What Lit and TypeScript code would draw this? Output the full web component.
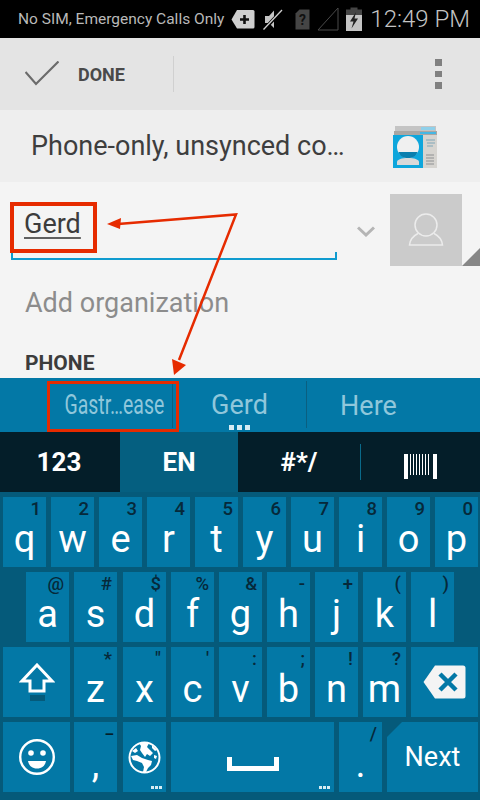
import { LitElement, html, css, svg } from 'lit';
import { customElement } from 'lit/decorators.js';

type Key = { main: string; sub?: string; nudge?: boolean };

const ROW1: Key[] = [
  { main: 'q', sub: '1' }, { main: 'w', sub: '2' }, { main: 'e', sub: '3' }, { main: 'r', sub: '4' },
  { main: 't', sub: '5' }, { main: 'y', sub: '6' }, { main: 'u', sub: '7' }, { main: 'i', sub: '8' },
  { main: 'o', sub: '9' }, { main: 'p', sub: '0' },
];
const ROW2: Key[] = [
  { main: 'a', sub: '@' }, { main: 's', sub: '#' }, { main: 'd', sub: '$', nudge: true }, { main: 'f', sub: '%' },
  { main: 'g', sub: '&' }, { main: 'h', sub: '-' }, { main: 'j', sub: '+' }, { main: 'k', sub: '(' }, { main: 'l', sub: ')' },
];
const ROW3: Key[] = [
  { main: 'z', sub: '*' }, { main: 'x', sub: '"', nudge: true }, { main: 'c', sub: "'" }, { main: 'v', sub: ':' },
  { main: 'b', sub: ';' }, { main: 'n', sub: '!' }, { main: 'm', sub: '?' },
];

@customElement('app-root')
export class AppRoot extends LitElement {
  static styles = css`
    :host {
      display: block;
      position: relative;
      width: 480px;
      height: 800px;
      overflow: hidden;
      background: #f4f4f4;
      font-family: Roboto, "Liberation Sans", sans-serif;
    }
    svg { display: block; flex: none; }

    .status {
      height: 38px;
      background: #000;
      display: flex;
      align-items: center;
      padding: 0 10px 0 18px;
      color: #b9b9b9;
    }
    .status-text { font-size: 15.5px; width: 213px; white-space: nowrap; }
    .status-icons { display: flex; align-items: center; flex: 1; }
    .time { font-size: 24px; font-weight: 300; color: #c4c4c4; margin-left: auto; white-space: nowrap; }
    .ic-mute { margin-left: 8px; }
    .ic-sim { margin-left: 12px; }
    .ic-signal { margin-left: 7px; }
    .ic-batt { margin-left: 7px; }

    .actionbar {
      height: 72px;
      background: #e4e4e4;
      display: flex;
      align-items: center;
      padding-left: 25px;
    }
    .done { font-size: 18px; font-weight: 700; color: #4a4a4a; margin-left: 19px; width: 48px; padding-top: 1px; }
    .divider { width: 1px; height: 36px; background: #d0d0d0; margin-left: 47px; }
    .overflow { margin-left: auto; margin-right: 38px; display: flex; flex-direction: column; gap: 5px; }
    .overflow i { display: block; width: 7px; height: 6.5px; background: #808080; }

    .account {
      height: 72px;
      background: #eeeeee;
      display: flex;
      align-items: center;
      padding-left: 31px;
      color: #3e3e3e;
      font-size: 27px;
    }
    .account span { width: 361px; white-space: nowrap; }

    .form { height: 196px; background: #f4f4f4; box-sizing: border-box; }
    .name-row { display: flex; height: 84px; padding: 12px 0 0 11px; box-sizing: border-box; }
    .name-field {
      width: 326px;
      height: 66px;
      box-sizing: border-box;
      border-bottom: 2px solid #0f9bcf;
      position: relative;
      padding: 14px 0 0 13px;
    }
    .name-field::before, .name-field::after {
      content: "";
      position: absolute;
      bottom: 0;
      width: 2px;
      height: 6px;
      background: #0f9bcf;
    }
    .name-field::before { left: 0; }
    .name-field::after { right: 0; }
    .name {
      font-size: 27px;
      color: #3c3c3c;
      text-decoration: underline;
      text-decoration-thickness: 2px;
      text-underline-offset: 4px;
      text-decoration-color: #606060;
    }
    .chevron { margin: 32px 0 0 20px; }
    .photo {
      width: 72px;
      height: 72px;
      background: #cbcbcb;
      margin-left: 15px;
      display: flex;
      align-items: center;
      justify-content: center;
      position: relative;
    }
    .corner { position: absolute; left: 72px; bottom: 0; }
    .org { font-size: 27px; color: #8c8c8c; padding: 22px 0 0 25px; height: 31px; line-height: 31px; }
    .section { font-size: 21px; font-weight: 700; color: #3c3c3c; padding: 33px 0 0 25px; line-height: 22px; }

    .suggest {
      height: 54px;
      background: #0378a6;
      display: flex;
      color: #90c7db;
      font-size: 27px;
      position: relative;
    }
    .sugg { display: flex; align-items: center; justify-content: center; height: 54px; box-sizing: border-box; }
    .sugg.first { width: 173px; padding-left: 56px; border-right: 1px solid #0a5f80; height: 47px; margin-top: 3px; padding-top: 1px; }
    .sugg.second { width: 134px; border-right: 1px solid #0a5f80; height: 47px; margin-top: 3px; padding-top: 1px; position: relative; }
    .sugg.third { width: 120px; padding-left: 3px; padding-top: 2px; }
    .squeezed { display: inline-block; transform: scaleX(0.72); white-space: nowrap; }
    .more { position: absolute; left: 50%; bottom: -2px; margin-left: -11px; display: flex; gap: 3px; }
    .more i { display: block; width: 5px; height: 5px; background: #d6ecf3; }

    .modes {
      height: 60px;
      background: #041e29;
      display: flex;
      align-items: center;
      color: #fff;
      font-size: 26px;
      font-weight: 700;
    }
    .mode { height: 60px; display: flex; align-items: center; justify-content: center; }
    .mode.num { width: 118px; }
    .mode.lang { width: 118px; margin-left: 2px; background: #055f80; }
    .mode.sym { width: 122px; }
    .mode-sep { width: 1px; height: 36px; background: #0a6a8a; }
    .barcode { margin: 8px 0 0 43px; }

    .keyboard {
      height: 308px;
      background: #055a7a;
      box-sizing: border-box;
      padding-top: 5px;
      display: flex;
      flex-direction: column;
      gap: 5px;
    }
    .row { display: flex; gap: 5px; padding-left: 3px; height: 70px; }
    .row.home { padding-left: 26px; }
    .key {
      width: 43px;
      height: 70px;
      background: #0378a6;
      color: #fff;
      position: relative;
      display: flex;
      align-items: center;
      justify-content: center;
      flex: none;
    }
    .key.nudge { margin-left: 1px; }
    .key.wide { width: 67px; margin-right: -1px; }
    .key.space { width: 163px; }
    .key.next { width: 91px; font-size: 27px; clip-path: polygon(15px 0, 100% 0, 100% 100%, 0 100%, 0 15px); }
    .main { font-size: 38px; line-height: 40px; margin-top: 14px; }
    .sub {
      position: absolute;
      top: 3px;
      right: 5px;
      font-size: 18.500px;
      line-height: 18px;
      font-weight: 500;
      color: #06293a;
    }
    .sub.dash { font-weight: 700; color: #041e29; right: 3px; font-size: 15px; }
    .dots { position: absolute; right: 4px; bottom: 3px; display: flex; gap: 1px; }
    .dots i { display: block; width: 3px; height: 3px; background: #d6ecf3; }

    .marks { position: absolute; left: 0; top: 0; pointer-events: none; }
  `;

  private keyCell(k: Key) {
    return html`<div class="key ${k.nudge ? 'nudge' : ''}">
      <span class="sub">${k.sub}</span><span class="main">${k.main}</span>
    </div>`;
  }

  private statusIcons() {
    return html`
      <svg width="24" height="21" viewBox="0 0 24 21">
        <path d="M6 1H22a1.500 1.500 0 0 1 1.500 1.500V18a1.500 1.500 0 0 1-1.500 1.500H6L0.500 10.500Z" fill="#cfcfcf"/>
        <path d="M9 10.500H18M13.500 6V15" stroke="#111" stroke-width="2.600"/>
      </svg>
      <svg class="ic-mute" width="20" height="23" viewBox="0 0 20 23">
        <path d="M2 8H6L11 2.500V20L6 15H2Z" fill="#c4c4c4"/>
        <path d="M0.500 22L19 2.500" stroke="#000" stroke-width="3.500"/>
        <path d="M0.500 21.500L19 2" stroke="#cfcfcf" stroke-width="1.300"/>
      </svg>
      <svg class="ic-sim" width="15" height="21" viewBox="0 0 15 21">
        <path d="M4.500 0.500H14.500V20.500H0.500V4.500Z" fill="#454545"/>
        <text x="7.500" y="16" font-size="14" font-weight="700" text-anchor="middle" fill="#111" font-family="Roboto">?</text>
      </svg>
      <svg class="ic-signal" width="22" height="24" viewBox="0 0 22 24">
        <path d="M21 1V23H1Z" fill="none" stroke="#4a4a4a" stroke-width="1"/>
      </svg>
      <svg class="ic-batt" width="16" height="24" viewBox="0 0 16 24">
        <path d="M4.500 0.500H11.500V2.500H16V24H0V2.500H4.500Z" fill="#454545"/>
        <path d="M0 8H16V24H0Z" fill="#c4c4c4"/>
        <path d="M10 5L4 14.500H7.500L5.500 21.500L12 11.500H8.500Z" fill="#222"/>
      </svg>`;
  }

  private contactsIcon() {
    return html`<svg width="46" height="46" viewBox="0 0 46 46">
      <path d="M3 3H44V8H3Z" fill="#c4c4c4"/>
      <path d="M29 4H43V7H29Z" fill="#8fd0ea"/>
      <path d="M2 8H45V12H2Z" fill="#a9a6a3"/>
      <path d="M28 9H44V11H28Z" fill="#45b7e4"/>
      <path d="M1 12H31V45H1Z" fill="#0ea6dc"/>
      <path d="M31 12H45V45H31Z" fill="#d6d4d0"/>
      <path d="M34 17H43M35 20H43M35 23H41" stroke="#7fa6b8" stroke-width="1"/>
      <path d="M34 32H42M34 35H42M34 38H42M34 41H42" stroke="#a6a6a6" stroke-width="1.500"/>
      <circle cx="16" cy="24" r="11" fill="#f0f0f0"/>
      <path d="M6.500 29H25.500C24 33.500 20.500 35 16 35C11.500 35 8 33.500 6.500 29Z" fill="#0a7fae"/>
      <path d="M5 42V39C5 36.500 10 35 16 35C22 35 27 36.500 27 39V42Z" fill="#d9d9d9"/>
    </svg>`;
  }

  private globe() {
    return svg`<svg width="33" height="33" viewBox="0 0 33 33">
      <circle cx="16.500" cy="16.500" r="15" fill="none" stroke="#fff" stroke-width="2"/>
      <g fill="#fff">
        <path d="M11 2L21 2L19 6L22 9L25 12L22 15L19 13L17 16L14 12L12 9L13 5Z"/>
        <path d="M4 10L8 7L10 10L7 12Z"/>
        <path d="M24 4L29 9L27 10L24 7Z"/>
        <path d="M3 15L9 14L14 17L20 19L24 20L23 24L20 27L18 31L15 31L16 26L14 22L9 20L5 19Z"/>
        <path d="M26 14L29 15L28 18L26 17Z"/>
      </g>
    </svg>`;
  }

  render() {
    return html`
      <div class="status">
        <span class="status-text">No SIM, Emergency Calls Only</span>
        <div class="status-icons">${this.statusIcons()}<span class="time">12:49 PM</span></div>
      </div>

      <div class="actionbar">
        <svg width="34" height="26" viewBox="0 0 34 26">
          <path d="M0.500 11L11 23L33.500 0.500" fill="none" stroke="#6b6b6b" stroke-width="2.200"/>
        </svg>
        <span class="done">DONE</span>
        <div class="divider"></div>
        <div class="overflow"><i></i><i></i><i></i></div>
      </div>

      <div class="account">
        <span>Phone-only, unsynced co…</span>
        ${this.contactsIcon()}
      </div>

      <div class="form">
        <div class="name-row">
          <div class="name-field"><span class="name">Gerd</span></div>
          <svg class="chevron" width="18" height="11" viewBox="0 0 18 11">
            <path d="M1 1.500L9 9L17 1.500" fill="none" stroke="#b5b5b5" stroke-width="3"/>
          </svg>
          <div class="photo">
            <svg width="36" height="36" viewBox="0 0 36 36" fill="none" stroke="#ececec" stroke-width="1.500">
              <circle cx="18" cy="13" r="11"/>
              <path d="M10 21.500C5 24 2 28 1.500 33H34.500C34 28 31 24 26 21.500"/>
            </svg>
            <svg class="corner" width="18" height="18" viewBox="0 0 18 18"><path d="M18 0V18H0Z" fill="#868686"/></svg>
          </div>
        </div>
        <div class="org">Add organization</div>
        <div class="section">PHONE</div>
      </div>

      <div class="suggest">
        <div class="sugg first"><span class="squeezed">Gastr…ease</span></div>
        <div class="sugg second">Gerd<div class="more"><i></i><i></i><i></i></div></div>
        <div class="sugg third">Here</div>
      </div>

      <div class="modes">
        <div class="mode num">123</div>
        <div class="mode lang">EN</div>
        <div class="mode sym">#*/</div>
        <div class="mode-sep"></div>
        <svg class="barcode" width="33" height="25" viewBox="0 0 33 25" fill="#fff">
          <path d="M0 0H4V21H0ZM6 0H7V21H6ZM9 0H10V21H9ZM12 0H13V21H12ZM15 0H16V21H15ZM18 0H19V21H18ZM21 0H22V21H21ZM24 0H25V21H24ZM29 0H33V25H29ZM0 21H4V25H0Z"/>
        </svg>
      </div>

      <div class="keyboard">
        <div class="row">${ROW1.map((k) => this.keyCell(k))}</div>
        <div class="row home">${ROW2.map((k) => this.keyCell(k))}</div>
        <div class="row">
          <div class="key wide">
            <svg width="36" height="38" viewBox="0 0 36 38">
              <path d="M18 2L33 18H25V28H11V18H3Z" fill="none" stroke="#fff" stroke-width="3"/>
              <path d="M11 32H26V38H11Z" fill="#055a7a"/>
            </svg>
          </div>
          ${ROW3.map((k) => this.keyCell(k))}
          <div class="key wide">
            <svg width="43" height="34" viewBox="0 0 43 34">
              <path d="M12 0.500H40a2.500 2.500 0 0 1 2.500 2.500V31a2.500 2.500 0 0 1-2.500 2.500H12L0.500 17Z" fill="#f4f4f4"/>
              <path d="M17 9L33 25M33 9L17 25" stroke="#0378a6" stroke-width="4.500"/>
            </svg>
          </div>
        </div>
        <div class="row">
          <div class="key wide">
            <svg width="36" height="36" viewBox="0 0 36 36">
              <circle cx="18" cy="18" r="16.800" fill="none" stroke="#fff" stroke-width="2.400"/>
              <circle cx="12" cy="14" r="2.800" fill="#fff"/>
              <circle cx="24" cy="14" r="2.800" fill="#fff"/>
              <path d="M9 22H27C26 27 23 29.500 18 29.500C13 29.500 10 27 9 22Z" fill="#fff"/>
            </svg>
          </div>
          <div class="key"><span class="sub dash">–</span><span class="main">,</span></div>
          <div class="key nudge">${this.globe()}<div class="dots"><i></i><i></i><i></i></div></div>
          <div class="key space">
            <svg width="52" height="14" viewBox="0 0 52 14" style="margin-top:14px">
              <path d="M2.500 0V11.500H49.500V0" fill="none" stroke="#fff" stroke-width="5"/>
            </svg>
            <div class="dots"><i></i><i></i><i></i></div>
          </div>
          <div class="key"><span class="sub">/</span><span class="main">.</span></div>
          <div class="key next">Next</div>
        </div>
      </div>

      <svg class="marks" width="480" height="800" viewBox="0 0 480 800">
        <g fill="none" stroke="#e62b00">
          <rect x="12" y="204" width="83" height="47" stroke-width="4"/>
          <rect x="48.500" y="382.500" width="129" height="48" stroke-width="3"/>
          <path d="M118 224L236 214.500L179 360" stroke-width="2.500"/>
        </g>
        <path d="M107 224L121 218L120 229Z" fill="#e62b00"/>
        <path d="M174 375L172 359L186 365Z" fill="#e62b00"/>
      </svg>
    `;
  }
}
